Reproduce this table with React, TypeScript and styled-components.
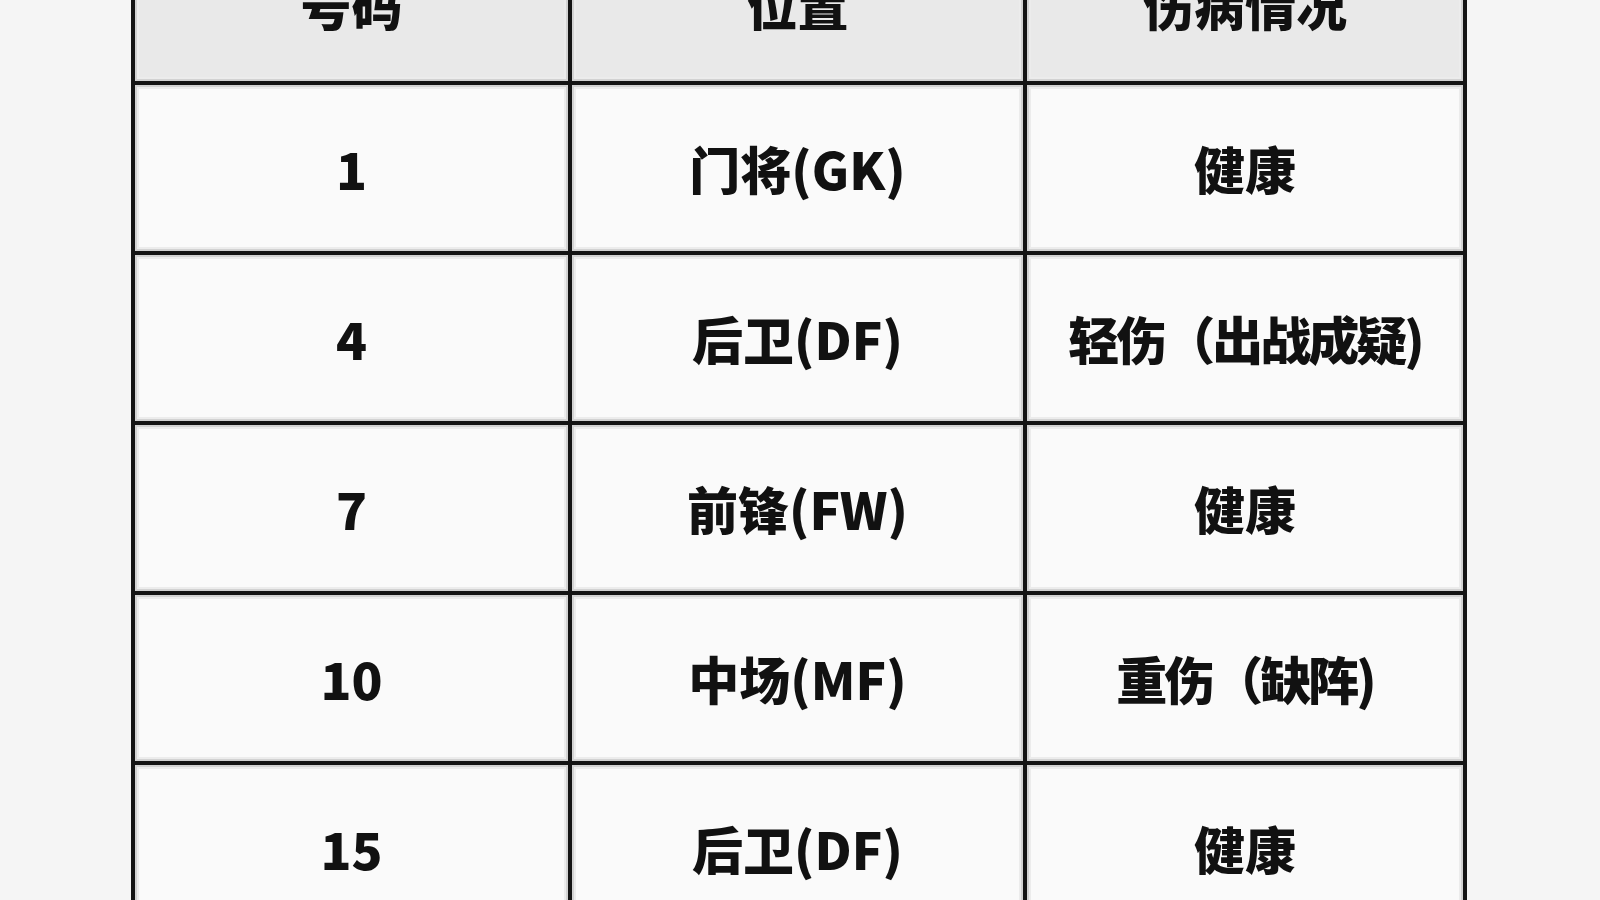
import React from 'react';
import styled, { createGlobalStyle } from 'styled-components';

const GlobalStyle = createGlobalStyle`
    html, body {
        margin: 0;
        padding: 0;
        overflow: hidden;
        background: #f5f5f5;
    }
    body {
        font-family: "Noto Sans CJK SC", "Noto Sans", sans-serif;
        color: #111;
    }
`;

const Page = styled.div`
    height: 900px;
    display: flex;
    justify-content: center;
`;

const Grid = styled.div`
    margin: -77px 0 0 -2px;
    align-self: flex-start;
    display: grid;
    grid-template-columns: 433px 451px 436px;
    grid-template-rows: 154px;
    grid-auto-rows: 166px;
    gap: 4px;
    padding: 4px;
    background: #141414;
`;

const Cell = styled.div<{ $head?: boolean; $tight?: boolean }>`
    display: flex;
    align-items: center;
    justify-content: center;
    background: ${(p) => (p.$head ? '#e9e9e9' : '#fafafa')};
    box-shadow: inset 0 0 0 2px #d2d2d2, inset 0 0 0 4px #ececec;
    font-size: 51px;
    font-weight: 900;
    line-height: 1;
    white-space: nowrap;
    letter-spacing: ${(p) => (p.$tight ? '-3px' : '0')};
`;

type Player = {
    number: number;
    position: string;
    injury: string;
};

const players: Player[] = [
    { number: 1, position: '门将(GK)', injury: '健康' },
    { number: 4, position: '后卫(DF)', injury: '轻伤（出战成疑)' },
    { number: 7, position: '前锋(FW)', injury: '健康' },
    { number: 10, position: '中场(MF)', injury: '重伤（缺阵)' },
    { number: 15, position: '后卫(DF)', injury: '健康' },
];

export default function App() {
    return (
        <>
            <GlobalStyle />
            <Page>
                <Grid>
                    <Cell $head>号码</Cell>
                    <Cell $head>位置</Cell>
                    <Cell $head>伤病情况</Cell>
                    {players.map((p) => (
                        <React.Fragment key={p.number}>
                            <Cell>{p.number}</Cell>
                            <Cell>{p.position}</Cell>
                            <Cell $tight={p.injury.includes('（')}>{p.injury}</Cell>
                        </React.Fragment>
                    ))}
                </Grid>
            </Page>
        </>
    );
}
